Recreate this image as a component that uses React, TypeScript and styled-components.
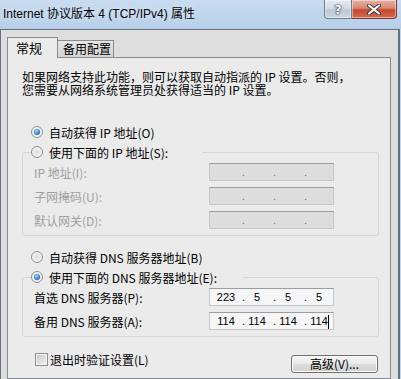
import styled, { createGlobalStyle } from 'styled-components';

const GlobalStyle = createGlobalStyle`
  html, body { margin: 0; padding: 0; }
  body {
    width: 401px;
    height: 379px;
    overflow: hidden;
    background: #c3d8ee;
    font-family: "Noto Sans CJK SC", "Noto Sans", sans-serif;
    font-size: 12px;
    color: #000;
  }
`;

const Window = styled.div`
  width: 401px;
  height: 379px;
  display: flex;
  flex-direction: column;
  overflow: hidden;
`;

const TitleBar = styled.div`
  height: 29px;
  flex: none;
  display: flex;
  justify-content: space-between;
  background: linear-gradient(180deg, #c9dcf1 0%, #bdd4ec 60%, #b6cee8 100%);
`;

const Title = styled.div`
  padding: 6px 0 0 3px;
  line-height: 16px;
  font-family: "Liberation Sans", "Noto Sans CJK SC", sans-serif;
  font-size: 12px;
  text-shadow: 0 0 6px #e8f1fa;
`;

const CaptionButtons = styled.div`
  display: flex;
  align-self: flex-start;
  margin-right: 4px;
`;

const CaptionButton = styled.div<{ $close?: boolean }>`
  box-sizing: border-box;
  height: 19px;
  width: ${p => (p.$close ? 45 : 28)}px;
  display: flex;
  align-items: center;
  justify-content: center;
  border: 1px solid ${p => (p.$close ? '#7a3a30' : '#6f7c8b')};
  border-top: none;
  border-left: ${p => (p.$close ? 'none' : undefined)};
  border-radius: ${p => (p.$close ? '0 0 4px 0' : '0 0 0 4px')};
  background: ${p =>
    p.$close
      ? 'linear-gradient(180deg, #e6b2a4 0%, #d98673 45%, #c5482f 55%, #d46a50 100%)'
      : 'linear-gradient(180deg, #e4ebf2 0%, #d3dde8 45%, #bccad8 55%, #c9d6e3 100%)'};
  box-shadow: inset 0 0 0 1px rgba(255, 255, 255, 0.45);
  color: #fff;
  font-family: "DejaVu Sans", sans-serif;
  font-weight: bold;
  font-size: 13px;
  text-shadow: 0 0 1px #2b2b2b, 0 0 1px #2b2b2b, 0 0 2px #444;
`;

const Frame = styled.div`
  flex: 1;
  display: flex;
  flex-direction: column;
  background: #dedede;
  border-top: 1px solid #68727e;
  border-left: 1px solid #68727e;
  border-right: 2px solid #68727e;
  margin-right: 1px;
  padding: 7px 7px 0 6px;
`;

const TabRow = styled.div`
  display: flex;
  align-items: flex-end;
`;

const Tab = styled.div<{ $active?: boolean }>`
  box-sizing: border-box;
  position: relative;
  z-index: ${p => (p.$active ? 1 : 0)};
  width: ${p => (p.$active ? 51 : 56)}px;
  height: ${p => (p.$active ? 21 : 17)}px;
  margin-bottom: ${p => (p.$active ? -1 : 0)}px;
  padding-left: ${p => (p.$active ? 8 : 5)}px;
  border: 1px solid #898c95;
  border-bottom: none;
  border-left: ${p => (p.$active ? '1px solid #898c95' : 'none')};
  background: ${p => (p.$active ? '#ebebeb' : 'linear-gradient(180deg, #e6e6e6, #d3d3d3)')};
  line-height: ${p => (p.$active ? 19 : 16)}px;
  font-size: ${p => (p.$active ? 13 : 12)}px;
`;

const Panel = styled.div`
  flex: 1;
  display: flex;
  flex-direction: column;
  border: 1px solid #898c95;
  background: #ebebeb;
  padding: 12px 11px 0 14px;
`;

const Intro = styled.p`
  margin: 0;
  line-height: 13px;
  font-size: 12px;
`;

const RadioRow = styled.div<{ $gap?: number }>`
  display: flex;
  align-items: center;
  gap: 6px;
  height: 16px;
  padding-left: 9px;
  margin-top: ${p => p.$gap ?? 0}px;
`;

const LegendRow = styled(RadioRow)`
  padding-left: 0;
`;

const Radio = styled.span<{ $on?: boolean }>`
  box-sizing: border-box;
  width: 12px;
  height: 12px;
  flex: none;
  border-radius: 50%;
  border: 1px solid #8b9097;
  background: radial-gradient(circle at 50% 50%, #dcdcdc 0, #f6f6f6 75%);
  display: flex;
  align-items: center;
  justify-content: center;
  &::after {
    content: '';
    display: ${p => (p.$on ? 'block' : 'none')};
    width: 6px;
    height: 6px;
    border-radius: 50%;
    background: radial-gradient(circle at 40% 35%, #a9dafc 0, #2f82d6 55%, #174f96 100%);
  }
`;

const Group = styled.fieldset`
  margin: 4px 0 0 0;
  padding: 3px 0 6px 11px;
  border: 1px solid #cfd7dd;
  border-radius: 3px;
  display: flex;
  flex-direction: column;
  gap: 6px;
  min-width: 0;
`;

const Legend = styled.legend<{ $w: number }>`
  box-sizing: border-box;
  width: ${p => p.$w}px;
  margin-left: -3px;
  padding: 0;
`;

const FieldRow = styled.div`
  display: flex;
  align-items: center;
  height: 18px;
`;

const FieldLabel = styled.span<{ $disabled?: boolean }>`
  width: 175px;
  flex: none;
  color: ${p => (p.$disabled ? '#a0a0a0' : '#000')};
`;

const IpBox = styled.div<{ $disabled?: boolean }>`
  box-sizing: border-box;
  width: 125px;
  height: 18px;
  display: flex;
  align-items: center;
  padding-left: 4px;
  border: 1px solid #c5c8cc;
  border-top-color: #9a9da2;
  background: ${p => (p.$disabled ? '#dddddd' : '#f6f6f6')};
  color: ${p => (p.$disabled ? '#6d6d6d' : '#000')};
  font-family: "Liberation Sans", sans-serif;
  font-size: 11px;
  line-height: 16px;
`;

const Octet = styled.span`
  width: 24px;
  text-align: center;
  white-space: nowrap;
`;

const Dot = styled.span`
  width: 7px;
  text-align: right;
`;

const Caret = styled.span`
  display: inline-block;
  width: 1px;
  height: 14px;
  margin-right: -1px;
  vertical-align: middle;
  background: #000;
`;

const Footer = styled.div`
  display: flex;
  justify-content: space-between;
  align-items: flex-start;
  margin-top: 16px;
`;

const CheckLabel = styled.label`
  display: flex;
  align-items: center;
  gap: 2px;
  padding-left: 13px;
  line-height: 13px;
`;

const Checkbox = styled.span`
  box-sizing: border-box;
  width: 13px;
  height: 13px;
  border: 1px solid #8e8f8f;
  box-shadow: inset 0 0 0 1px #f3f3f3;
  background: linear-gradient(135deg, #c6c6c6, #f2f2f2);
`;

const Button = styled.div`
  box-sizing: border-box;
  width: 87px;
  height: 18px;
  margin: 2px 1px 0 0;
  border: 1px solid #707070;
  border-radius: 3px;
  box-shadow: inset 0 0 0 1px #fbfbfb;
  background: linear-gradient(180deg, #f4f4f4 0%, #ebebeb 45%, #dcdcdc 55%, #d0d0d0 100%);
  text-align: center;
  line-height: 16px;
`;

type IpFieldProps = { octets?: string[]; disabled?: boolean; caret?: boolean };

const IpField = ({ octets = ['', '', '', ''], disabled, caret }: IpFieldProps) => (
  <IpBox $disabled={disabled}>
    {octets.map((o, i) => (
      <span key={i} style={{ display: 'contents' }}>
        {i > 0 && <Dot>.</Dot>}
        <Octet>
          {o}
          {caret && i === 3 && <Caret />}
        </Octet>
      </span>
    ))}
  </IpBox>
);

export default function App() {
  return (
    <Window>
      <GlobalStyle />
      <TitleBar>
        <Title>Internet 协议版本 4 (TCP/IPv4) 属性</Title>
        <CaptionButtons>
          <CaptionButton>?</CaptionButton>
          <CaptionButton $close>
            <svg width="14" height="11" viewBox="0 0 14 11">
              <path
                d="M2 1.5 L12 9.5 M12 1.5 L2 9.5"
                stroke="#3a3a3a"
                strokeWidth="4"
                strokeLinecap="round"
              />
              <path d="M2 1.5 L12 9.5 M12 1.5 L2 9.5" stroke="#fff" strokeWidth="2.2" strokeLinecap="round" />
            </svg>
          </CaptionButton>
        </CaptionButtons>
      </TitleBar>
      <Frame>
        <TabRow>
          <Tab $active>常规</Tab>
          <Tab>备用配置</Tab>
        </TabRow>
        <Panel>
          <Intro>
            如果网络支持此功能，则可以获取自动指派的 IP 设置。否则，
            <br />
            您需要从网络系统管理员处获得适当的 IP 设置。
          </Intro>

          <RadioRow $gap={28}>
            <Radio $on />
            自动获得 IP 地址(O)
          </RadioRow>
          <Group>
            <Legend $w={171}>
              <LegendRow>
                <Radio />
                使用下面的 IP 地址(S):
              </LegendRow>
            </Legend>
            <FieldRow>
              <FieldLabel $disabled>IP 地址(I):</FieldLabel>
              <IpField disabled />
            </FieldRow>
            <FieldRow>
              <FieldLabel $disabled>子网掩码(U):</FieldLabel>
              <IpField disabled />
            </FieldRow>
            <FieldRow>
              <FieldLabel $disabled>默认网关(D):</FieldLabel>
              <IpField disabled />
            </FieldRow>
          </Group>

          <RadioRow $gap={13}>
            <Radio />
            自动获得 DNS 服务器地址(B)
          </RadioRow>
          <Group>
            <Legend $w={212}>
              <LegendRow>
                <Radio $on />
                使用下面的 DNS 服务器地址(E):
              </LegendRow>
            </Legend>
            <FieldRow>
              <FieldLabel>首选 DNS 服务器(P):</FieldLabel>
              <IpField octets={['223', '5', '5', '5']} />
            </FieldRow>
            <FieldRow>
              <FieldLabel>备用 DNS 服务器(A):</FieldLabel>
              <IpField octets={['114', '114', '114', '114']} caret />
            </FieldRow>
          </Group>

          <Footer>
            <CheckLabel>
              <Checkbox />
              退出时验证设置(L)
            </CheckLabel>
            <Button>高级(V)...</Button>
          </Footer>
        </Panel>
      </Frame>
    </Window>
  );
}
